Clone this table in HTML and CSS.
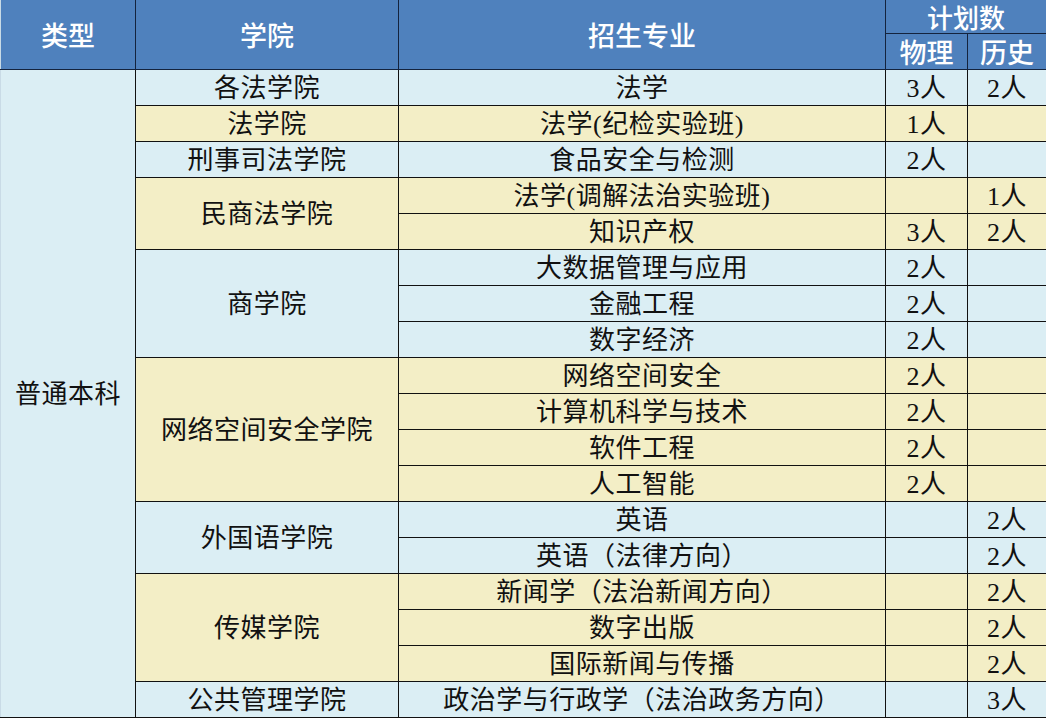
FILE: index.html
```html
<!DOCTYPE html>
<html lang="zh-CN">
<head>
<meta charset="utf-8">
<title>招生计划</title>
<link rel="stylesheet" href="styles.css">
</head>
<body>
<table class="plan">
  <colgroup>
    <col class="c-type"><col class="c-college"><col class="c-major"><col class="c-phy"><col class="c-his">
  </colgroup>
  <thead>
    <tr class="h1">
      <th rowspan="2">类型</th>
      <th rowspan="2">学院</th>
      <th rowspan="2">招生专业</th>
      <th colspan="2" class="plan-head">计划数</th>
    </tr>
    <tr class="h2">
      <th>物理</th>
      <th>历史</th>
    </tr>
  </thead>
  <tbody>
    <tr class="b">
      <td class="type" rowspan="18">普通本科</td>
      <td>各法学院</td><td>法学</td><td class="n">3人</td><td class="n">2人</td>
    </tr>
    <tr class="y">
      <td>法学院</td><td>法学(纪检实验班)</td><td class="n">1人</td><td class="n"></td>
    </tr>
    <tr class="b">
      <td>刑事司法学院</td><td>食品安全与检测</td><td class="n">2人</td><td class="n"></td>
    </tr>
    <tr class="y">
      <td rowspan="2">民商法学院</td><td>法学(调解法治实验班)</td><td class="n"></td><td class="n">1人</td>
    </tr>
    <tr class="y">
      <td>知识产权</td><td class="n">3人</td><td class="n">2人</td>
    </tr>
    <tr class="b">
      <td rowspan="3">商学院</td><td>大数据管理与应用</td><td class="n">2人</td><td class="n"></td>
    </tr>
    <tr class="b">
      <td>金融工程</td><td class="n">2人</td><td class="n"></td>
    </tr>
    <tr class="b">
      <td>数字经济</td><td class="n">2人</td><td class="n"></td>
    </tr>
    <tr class="y">
      <td rowspan="4">网络空间安全学院</td><td>网络空间安全</td><td class="n">2人</td><td class="n"></td>
    </tr>
    <tr class="y">
      <td>计算机科学与技术</td><td class="n">2人</td><td class="n"></td>
    </tr>
    <tr class="y">
      <td>软件工程</td><td class="n">2人</td><td class="n"></td>
    </tr>
    <tr class="y">
      <td>人工智能</td><td class="n">2人</td><td class="n"></td>
    </tr>
    <tr class="b">
      <td rowspan="2">外国语学院</td><td>英语</td><td class="n"></td><td class="n">2人</td>
    </tr>
    <tr class="b">
      <td>英语（法律方向）</td><td class="n"></td><td class="n">2人</td>
    </tr>
    <tr class="y">
      <td rowspan="3">传媒学院</td><td>新闻学（法治新闻方向）</td><td class="n"></td><td class="n">2人</td>
    </tr>
    <tr class="y">
      <td>数字出版</td><td class="n"></td><td class="n">2人</td>
    </tr>
    <tr class="y">
      <td>国际新闻与传播</td><td class="n"></td><td class="n">2人</td>
    </tr>
    <tr class="b">
      <td>公共管理学院</td><td>政治学与行政学（法治政务方向）</td><td class="n"></td><td class="n">3人</td>
    </tr>
  </tbody>
</table>
</body>
</html>
```

FILE: styles.css
```css
html, body {
  margin: 0;
  padding: 0;
  background: #ffffff;
}

.plan {
  border-collapse: collapse;
  table-layout: fixed;
  width: 1046px;
  font-family: "Liberation Serif", "Noto Sans CJK SC", serif;
  color: #111111;
}

.c-type { width: 135px; }
.c-college { width: 263px; }
.c-major { width: 487px; }
.c-phy { width: 82px; }
.c-his { width: 79px; }

.plan th {
  background: #4f81bd;
  color: #ffffff;
  font-family: "Noto Sans CJK SC", sans-serif;
  font-weight: 500;
  font-size: 27px;
  line-height: 28px;
  padding: 0;
  border: 1px solid #14233d;
  text-align: center;
  vertical-align: middle;
}

.plan .h1 th { height: 33px; }
.plan .h2 th { height: 35px; }
.plan thead tr:first-child th { border-top: none; }
.plan th.plan-head { line-height: 33px; font-size: 26px; }

.plan td {
  font-family: "Liberation Serif", "Noto Sans CJK SC", serif;
  font-size: 26px;
  line-height: 30px;
  height: 33px;
  padding: 2px 0 0;
  border: 1px solid #111111;
  text-align: center;
  vertical-align: middle;
  letter-spacing: 0.5px;
}

.plan tr.b td { background: #dbeef4; }
.plan tr.y td { background: #f3eec6; }
.plan td.type { background: #dbeef4 !important; }

.plan th:first-child,
.plan td.type { border-left: 1px solid #c9dbe6; }
```
